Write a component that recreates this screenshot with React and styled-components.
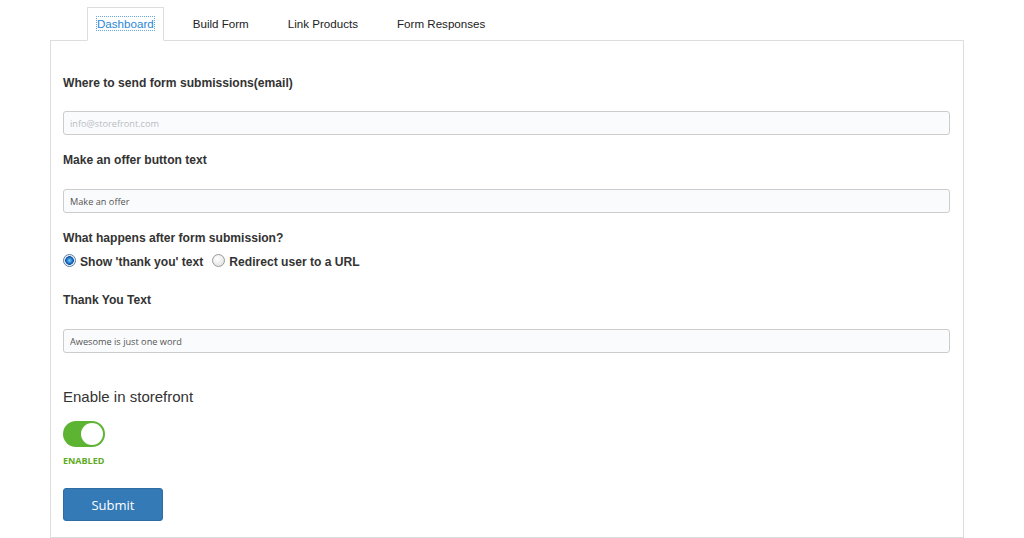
import styled, { createGlobalStyle } from "styled-components";

const GlobalStyle = createGlobalStyle`
  body {
    margin: 0;
    background: #fff;
    font-family: "Liberation Sans", Arial, sans-serif;
    color: #333;
  }
`;

const tabs = ["Dashboard", "Build Form", "Link Products", "Form Responses"];

const App = () => {
  return (
    <>
      <GlobalStyle />
      <Wrapper>
        <TabBar>
          {tabs.map((t, i) => (
            <Tab key={t} active={i === 0}>
              <TabText active={i === 0}>{t}</TabText>
            </Tab>
          ))}
        </TabBar>
        <Panel>
          <Label>Where to send form submissions(email)</Label>
          <Input faint top={21} defaultValue="info@storefront.com" />
          <Label top={18}>Make an offer button text</Label>
          <Input defaultValue="Make an offer" />
          <Label top={18}>What happens after form submission?</Label>
          <RadioRow>
            <RadioOption>
              <Radio checked />
              Show 'thank you' text
            </RadioOption>
            <RadioOption>
              <Radio />
              Redirect user to a URL
            </RadioOption>
          </RadioRow>
          <Label top={24}>Thank You Text</Label>
          <Input defaultValue="Awesome is just one word" />
          <Heading>Enable in storefront</Heading>
          <Toggle>
            <Knob />
          </Toggle>
          <Status>ENABLED</Status>
          <Button>Submit</Button>
        </Panel>
      </Wrapper>
    </>
  );
};

const Wrapper = styled.div`
  margin: 0 60px 0 50px;
  padding-top: 7px;
`;
const TabBar = styled.div`
  display: flex;
  gap: 19px;
  padding-left: 37px;
  margin-bottom: -1px;
  position: relative;
  z-index: 1;
`;
const Tab = styled.div`
  height: 34px;
  box-sizing: border-box;
  padding: 0 9px;
  display: flex;
  align-items: center;
  border: 1px solid ${(p) => (p.active ? "#ddd" : "transparent")};
  border-bottom-color: ${(p) => (p.active ? "#fff" : "transparent")};
  background: ${(p) => (p.active ? "#fff" : "transparent")};
  font-size: 11.6px;
`;
const TabText = styled.span`
  color: ${(p) => (p.active ? "#2a88d4" : "#222")};
  outline: ${(p) => (p.active ? "1px dotted #6aa8e0" : "none")};
  line-height: 13px;
  margin-bottom: 2px;
`;
const Panel = styled.div`
  border: 1px solid #ddd;
  padding: 35px 13px 16px 12px;
  display: flex;
  flex-direction: column;
  align-items: flex-start;
`;
const Label = styled.div`
  font-size: 12.1px;
  font-weight: bold;
  line-height: 14px;
  color: #333;
  margin-top: ${(p) => p.top || 0}px;
`;
const Input = styled.input`
  margin-top: ${(p) => p.top || 22}px;
  width: 100%;
  height: 24px;
  box-sizing: border-box;
  border: 1px solid #ccc;
  border-radius: 3px;
  background: #fafbfc;
  padding: 0 6px;
  font-family: "Open Sans", sans-serif;
  font-size: 9.2px;
  color: ${(p) => (p.faint ? "#b8bcc4" : "#555")};
  outline: none;
`;
const RadioRow = styled.div`
  display: flex;
  gap: 9px;
  margin-top: 10px;
  font-size: 12.1px;
  font-weight: bold;
  line-height: 14px;
`;
const RadioOption = styled.label`
  display: flex;
  align-items: center;
  gap: 4px;
`;
const Radio = styled.span`
  width: 13px;
  height: 13px;
  border-radius: 50%;
  box-sizing: border-box;
  border: 1px solid ${(p) => (p.checked ? "#5b7fa8" : "#9a9a9a")};
  background: ${(p) =>
    p.checked
      ? "radial-gradient(circle, #7fd0ff 0, #1a70c8 3px, #0d4f9a 4px, #e8eef5 4.6px, #f8f8f8 6px)"
      : "radial-gradient(circle at 40% 35%, #ffffff 0, #e6e6e6 70%, #d2d2d2 100%)"};
  margin-top: -3px;
`;
const Heading = styled.div`
  margin-top: 35px;
  font-size: 15px;
  line-height: 18px;
  color: #333;
`;
const Toggle = styled.div`
  margin-top: 15px;
  width: 42px;
  height: 26px;
  box-sizing: border-box;
  border-radius: 13px;
  background: #5cb432;
  padding: 2px;
  display: flex;
  justify-content: flex-end;
`;
const Knob = styled.span`
  width: 22px;
  height: 22px;
  border-radius: 50%;
  background: #fff;
`;
const Status = styled.div`
  margin-top: 8px;
  font-family: "Open Sans", sans-serif;
  font-size: 9px;
  font-weight: bold;
  line-height: 11px;
  color: #5fab1f;
`;
const Button = styled.button`
  margin-top: 22px;
  width: 100px;
  height: 33px;
  border: 1px solid #2e6da4;
  border-radius: 3px;
  background: #337ab7;
  color: #fff;
  font-family: "Open Sans", sans-serif;
  font-size: 13px;
`;

export default App;
